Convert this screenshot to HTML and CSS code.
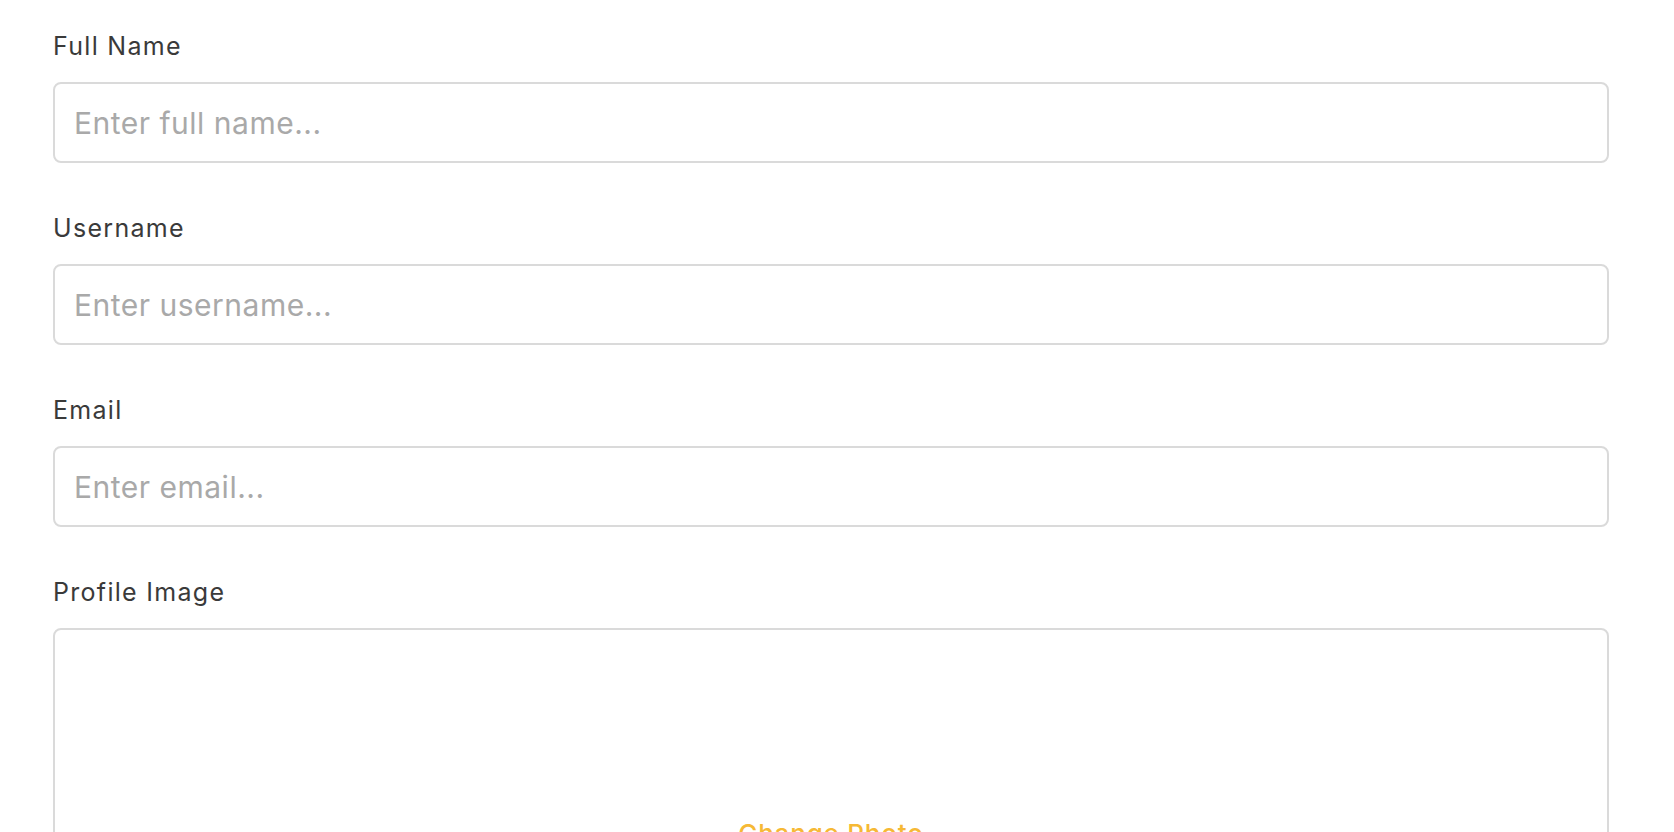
FILE: index.html
```html
<!DOCTYPE html>
<html lang="en">
<head>
<meta charset="utf-8">
<title>Profile</title>
<link rel="stylesheet" href="styles.css">
</head>
<body>
<form class="form">
  <div class="field">
    <label class="label" for="fullname">Full Name</label>
    <input class="input" id="fullname" type="text" placeholder="Enter full name...">
  </div>
  <div class="field">
    <label class="label" for="username">Username</label>
    <input class="input" id="username" type="text" placeholder="Enter username...">
  </div>
  <div class="field">
    <label class="label" for="email">Email</label>
    <input class="input" id="email" type="email" placeholder="Enter email...">
  </div>
  <div class="field">
    <span class="label">Profile Image</span>
    <div class="image-box">
      <div class="image-preview"></div>
      <button type="button" class="change-photo">Change Photo</button>
    </div>
  </div>
</form>
</body>
</html>
```
FILE: styles.css
```css
html, body {
  margin: 0;
  padding: 0;
  background: #ffffff;
  overflow: hidden;
}
body {
  font-family: Inter, "Noto Sans", "Liberation Sans", sans-serif;
  color: #3d3d3d;
}
.form {
  display: flex;
  flex-direction: column;
  gap: 50px;
  padding: 31px 65px 0 53px;
}
.field {
  display: flex;
  flex-direction: column;
  gap: 21px;
}
.label {
  font-size: 25px;
  line-height: 30px;
  letter-spacing: 1.3px;
  color: #3a3a3a;
}
.input {
  box-sizing: border-box;
  height: 81px;
  width: 100%;
  border: 2px solid #dadada;
  border-radius: 8px;
  padding: 0 19px;
  font-family: inherit;
  font-size: 30px;
  letter-spacing: 0.5px;
  color: #333;
  background: #fff;
  outline: none;
}
.input::placeholder {
  color: #a9a9a9;
}
.image-box {
  box-sizing: border-box;
  border: 2px solid #dadada;
  border-radius: 8px;
  height: 360px;
  display: flex;
  flex-direction: column;
  align-items: center;
}
.image-preview {
  height: 188px;
}
.change-photo {
  border: none;
  background: none;
  padding: 0;
  font-family: inherit;
  font-size: 26px;
  line-height: 32px;
  font-weight: 500;
  letter-spacing: 0.8px;
  color: #f6b935;
  cursor: pointer;
}
```
